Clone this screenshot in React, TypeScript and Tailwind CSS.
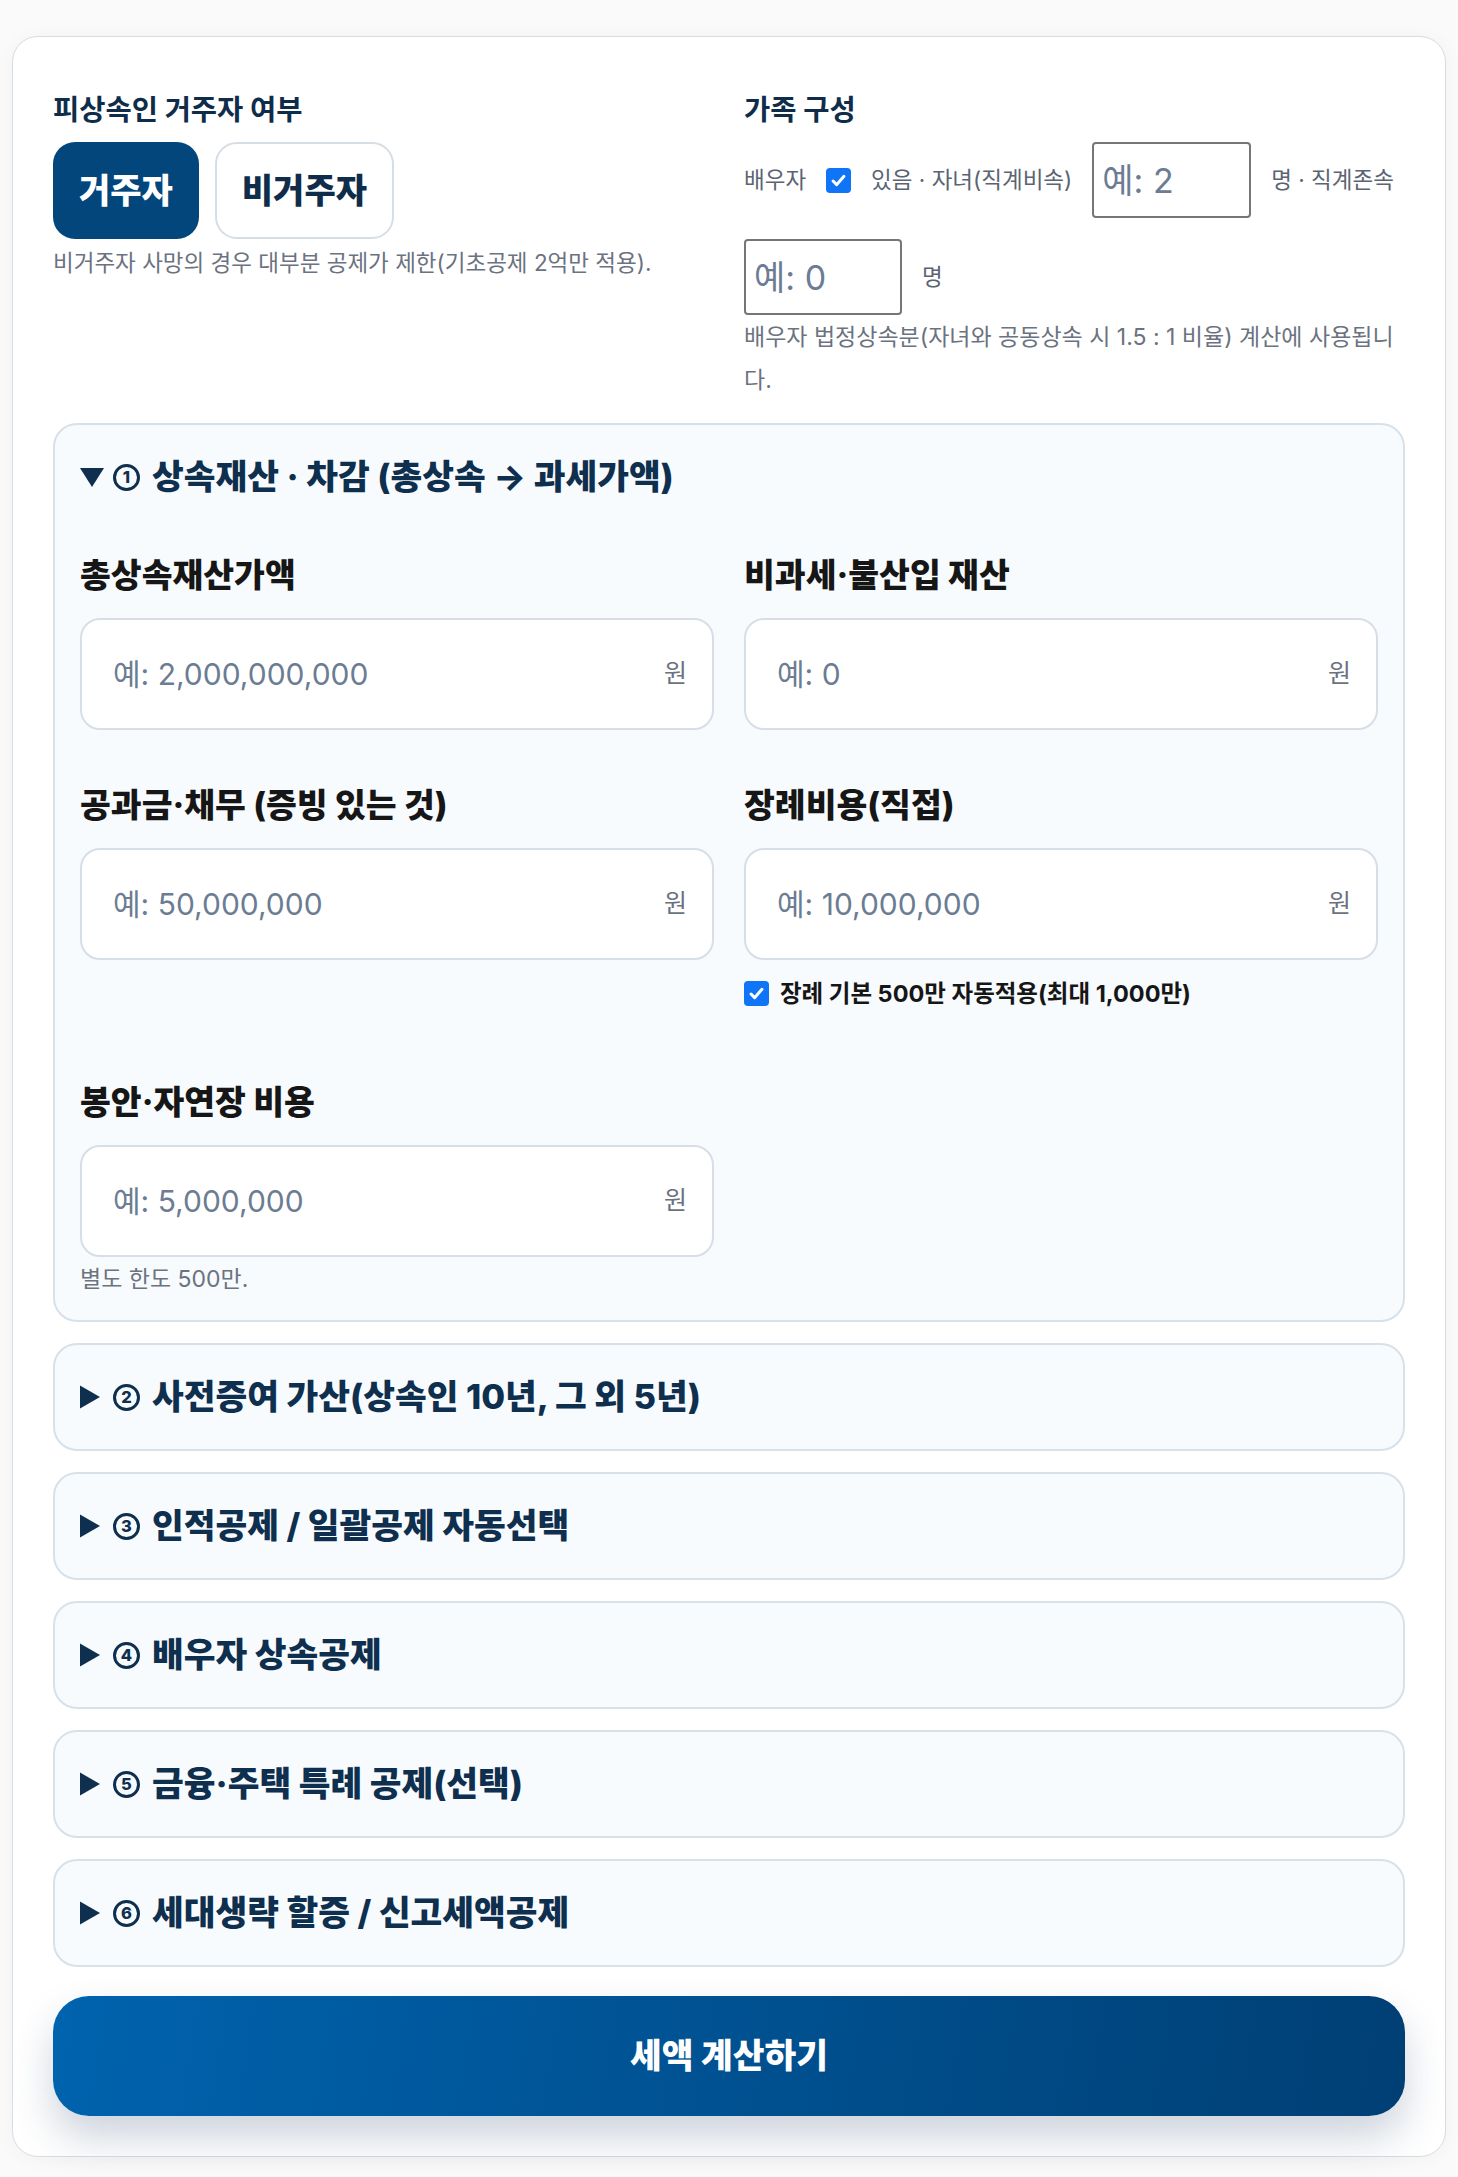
import React from "react";

const FONT = "font-['Inter','Noto_Sans_CJK_KR',sans-serif]";

function CheckBox() {
  return (
    <span className="flex h-[25px] w-[25px] shrink-0 items-center justify-center rounded-[4px] bg-[#0f74f5]">
      <svg viewBox="0 0 16 16" className="h-[19px] w-[19px]">
        <path d="M3.4 8.4l3 3.1 6.2-7" fill="none" stroke="white" strokeWidth="2.5" strokeLinecap="round" strokeLinejoin="round" />
      </svg>
    </span>
  );
}

function Marker({ open }: { open: boolean }) {
  return open ? (
    <svg viewBox="0 0 24 24" className="h-[24px] w-[24px] shrink-0">
      <polygon points="0,3 24,3 12,22" fill="#0f2f4e" />
    </svg>
  ) : (
    <svg viewBox="0 0 24 24" className="h-[24px] w-[24px] shrink-0">
      <polygon points="0,0.5 20,12 0,23.5" fill="#0f2f4e" />
    </svg>
  );
}

function Panel({ open = false, num, title, children }: { open?: boolean; num: string; title: string; children?: React.ReactNode }) {
  return (
    <div className="rounded-[24px] border-2 border-[#d8e0e8] bg-[#f7fbfe]">
      <div className="flex items-center px-[25px] py-[31px] text-[34.5px] font-extrabold leading-[42px] text-[#0f2f4e]">
        <Marker open={open} />
        <span className="ml-[9px] flex h-[27px] w-[27px] shrink-0 items-center justify-center rounded-full border-[3.5px] border-[#0f2f4e] text-[16.5px] leading-none font-extrabold">
          {num}
        </span>
        <span className="ml-[12px]">{title}</span>
      </div>
      {children}
    </div>
  );
}

function MoneyField({ label, ph, children }: { label: string; ph: string; children?: React.ReactNode }) {
  return (
    <div>
      <div className="text-[33.5px] font-extrabold leading-[46px] text-[#161616]">{label}</div>
      <div className="mt-[20px] flex h-[112px] items-center rounded-[20px] border-2 border-[#d7dee6] bg-white pl-[31px] pr-[25px]">
        <input
          className="min-w-0 flex-1 bg-transparent text-[30px] text-[#1f2937] outline-none placeholder:text-[#6b7c93]"
          placeholder={ph}
        />
        <span className="text-[25px] text-[#6b7280]">원</span>
      </div>
      {children}
    </div>
  );
}

export default function App() {
  return (
    <div className={`min-h-screen bg-[#fafafa] px-3 pt-[36px] pb-5 ${FONT}`}>
      <div className="rounded-[26px] border border-[#d5dde6] bg-white px-10 pt-[53px] pb-10 shadow-[0_2px_20px_rgba(15,40,70,0.04)]">
        <div className="flex flex-col gap-[21px]">
          {/* 상단: 거주자 여부 / 가족 구성 */}
          <div className="grid grid-cols-2 gap-x-[30px]">
            <div>
              <h3 className="text-[28.5px] font-bold leading-[39px] text-[#0f2d4a]">피상속인 거주자 여부</h3>
              <div className="mt-[13px] flex gap-4">
                <button className="h-[97px] rounded-[22px] bg-[#02467b] px-[26px] text-[34px] font-extrabold text-white">
                  거주자
                </button>
                <button className="h-[97px] rounded-[22px] border-2 border-[#d6dde5] bg-white px-[25px] text-[34px] font-extrabold text-[#0f2d4a]">
                  비거주자
                </button>
              </div>
              <p className="mt-[8px] text-[22.5px] leading-[32px] text-[#6b7280]">
                비거주자 사망의 경우 대부분 공제가 제한(기초공제 2억만 적용).
              </p>
            </div>
            <div>
              <h3 className="text-[28.5px] font-bold leading-[39px] text-[#0f2d4a]">가족 구성</h3>
              <div className="mt-[13px] flex flex-wrap items-center gap-x-[20px] gap-y-[21px] text-[22.5px] text-[#5b6472]">
                <span>배우자</span>
                <CheckBox />
                <span>있음 · 자녀(직계비속)</span>
                <input
                  className="h-[76px] w-[159px] rounded-[4px] border-2 border-[#767676] bg-white px-[8px] text-[34px] outline-none placeholder:text-[#6b7c93]"
                  placeholder="예: 2"
                />
                <span>명 · 직계존속</span>
                <input
                  className="h-[76px] w-[158px] rounded-[4px] border-2 border-[#767676] bg-white px-[8px] text-[34px] outline-none placeholder:text-[#6b7c93]"
                  placeholder="예: 0"
                />
                <span>명</span>
              </div>
              <p className="mt-px text-[23px] leading-[43px] text-[#6b7280]">
                배우자 법정상속분(자녀와 공동상속 시 1.5 : 1 비율) 계산에 사용됩니다.
              </p>
            </div>
          </div>

          {/* ① 상속재산 */}
          <Panel open num="1" title="상속재산 · 차감 (총상속 → 과세가액)">
            <div className="grid grid-cols-2 items-start gap-x-[30px] gap-y-[52px] px-[25px] pt-[23px] pb-[24px]">
              <MoneyField label="총상속재산가액" ph="예: 2,000,000,000" />
              <MoneyField label="비과세·불산입 재산" ph="예: 0" />
              <MoneyField label="공과금·채무 (증빙 있는 것)" ph="예: 50,000,000" />
              <MoneyField label="장례비용(직접)" ph="예: 10,000,000">
                <label className="mt-[17px] mb-[17px] flex items-center gap-[11px] text-[23.5px] font-bold leading-[33px] text-[#161616]">
                  <CheckBox />
                  <span>장례 기본 500만 자동적용(최대 1,000만)</span>
                </label>
              </MoneyField>
              <MoneyField label="봉안·자연장 비용" ph="예: 5,000,000">
                <p className="mt-[6px] text-[23px] leading-[33px] text-[#6b7280]">별도 한도 500만.</p>
              </MoneyField>
            </div>
          </Panel>

          <Panel num="2" title="사전증여 가산(상속인 10년, 그 외 5년)" />
          <Panel num="3" title="인적공제 / 일괄공제 자동선택" />
          <Panel num="4" title="배우자 상속공제" />
          <Panel num="5" title="금융·주택 특례 공제(선택)" />
          <Panel num="6" title="세대생략 할증 / 신고세액공제" />

          <button className="mt-[8px] h-[120px] w-full rounded-[36px] bg-[linear-gradient(100deg,#0063ae,#003f74)] text-[34.5px] font-extrabold text-white shadow-[0_22px_40px_rgba(30,60,100,0.22)]">
            세액 계산하기
          </button>
        </div>
      </div>
    </div>
  );
}
